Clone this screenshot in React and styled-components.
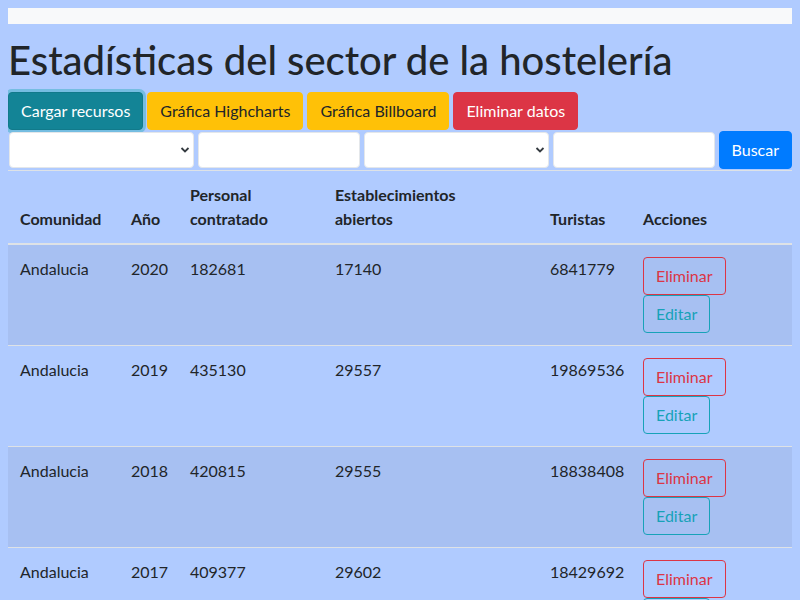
import React from 'react';
import styled, { createGlobalStyle, css } from 'styled-components';

const GlobalStyle = createGlobalStyle`
    * { box-sizing: border-box; }
    body {
        margin: 8px;
        background: #b0cbff;
        font-family: Lato, "Noto Sans", sans-serif;
        font-size: 16px;
        line-height: 1.5;
        color: #212529;
    }
`

const variants = {
    info: css`background: #138496; border-color: #117a8b; color: #fff; box-shadow: 0 0 0 3px rgba(58, 176, 195, 0.5);`,
    warning: css`background: #ffc107; border-color: #ffc107; color: #212529;`,
    danger: css`background: #dc3545; border-color: #dc3545; color: #fff;`,
    primary: css`background: #007bff; border-color: #007bff; color: #fff;`,
    outlineDanger: css`background: transparent; border-color: #dc3545; color: #dc3545;`,
    outlineInfo: css`background: transparent; border-color: #17a2b8; color: #17a2b8;`,
}

const TopBar = styled.nav`
    height: 16px;
    background: #f8f9fa;
`

const Title = styled.h1`
    margin: 12px 0 8px;
    font-size: 40px;
    font-weight: 500;
    line-height: 1.2;
`

const Button = styled.button`
    display: ${(p) => (p.block ? 'block' : 'inline-block')};
    height: 38px;
    padding: 6px 12px;
    border: 1px solid transparent;
    border-radius: 4px;
    font-family: inherit;
    font-size: 16px;
    line-height: 24px;
    white-space: nowrap;
    cursor: pointer;
    ${(p) => variants[p.variant]}
`

const Toolbar = styled.div`
    display: flex;
    gap: 4px;
`

const SearchRow = styled.form`
    display: flex;
    align-items: center;
    gap: 4px;
    margin-top: 1px;
    padding-left: 1px;
`

const SelectWrap = styled.div`
    position: relative;
    width: ${(p) => p.w}px;
`

const Select = styled.select`
    appearance: none;
    width: 100%;
    height: 36px;
    border: 1px solid #e4e7ea;
    border-radius: 4px;
    background: #fff;
    font-family: inherit;
    font-size: 16px;
`

const Chevron = styled.svg`
    position: absolute;
    right: 4px;
    top: 14px;
    pointer-events: none;
`

const Input = styled.input`
    width: ${(p) => p.w}px;
    height: 36px;
    border: 1px solid #e4e7ea;
    border-radius: 4px;
    background: #fff;
    font-family: inherit;
    font-size: 16px;
`

const Table = styled.table`
    width: 100%;
    margin-top: 1px;
    border-collapse: collapse;
    table-layout: fixed;
`

const Th = styled.th`
    padding: 12px;
    text-align: left;
    vertical-align: bottom;
    font-weight: 700;
    border-top: 1px solid #dee2e6;
    border-bottom: 2px solid #dee2e6;
`

const HeadLabel = styled.span`
    display: block;
    max-width: 150px;
`

const Row = styled.tr`
    background: ${(p) => (p.striped ? 'rgba(0, 0, 0, 0.05)' : 'transparent')};
`

const Td = styled.td`
    padding: 12px;
    vertical-align: top;
    border-top: 1px solid #dee2e6;
`

const SelectBox = ({ w }) => (
    <SelectWrap w={w}>
        <Select>
            <option></option>
        </Select>
        <Chevron width="10" height="8" viewBox="0 0 10 8">
            <path d="M1.5 2 L5 5.5 L8.5 2" fill="none" stroke="#343a40" strokeWidth="1.8" />
        </Chevron>
    </SelectWrap>
)

const columns = [
    ['Comunidad', 111],
    ['Año', 59],
    ['Personal contratado', 145],
    ['Establecimientos abiertos', 215],
    ['Turistas', 93],
    ['Acciones', 161],
]

const data = [
    ['Andalucia', 2020, 182681, 17140, 6841779],
    ['Andalucia', 2019, 435130, 29557, 19869536],
    ['Andalucia', 2018, 420815, 29555, 18838408],
    ['Andalucia', 2017, 409377, 29602, 18429692],
    ['Andalucia', 2016, 391208, 29410, 17882751],
]

export default function App() {
    return (
        <div>
            <GlobalStyle />
            <TopBar />
            <Title>Estadísticas del sector de la hostelería</Title>
            <Toolbar>
                <Button variant="info">Cargar recursos</Button>
                <Button variant="warning">Gráfica Highcharts</Button>
                <Button variant="warning">Gráfica Billboard</Button>
                <Button variant="danger">Eliminar datos</Button>
            </Toolbar>
            <SearchRow onSubmit={(e) => e.preventDefault()}>
                <SelectBox w={186} />
                <Input w={162} />
                <SelectBox w={185} />
                <Input w={162} />
                <Button variant="primary">Buscar</Button>
            </SearchRow>
            <Table>
                <colgroup>
                    {columns.map(([name, w]) => <col key={name} style={{ width: w }} />)}
                </colgroup>
                <thead>
                    <tr>
                        {columns.map(([name]) => <Th key={name}><HeadLabel>{name}</HeadLabel></Th>)}
                    </tr>
                </thead>
                <tbody>
                    {data.map((r, i) => (
                        <Row key={r[1]} striped={i % 2 === 0}>
                            {r.map((v, j) => <Td key={j}>{v}</Td>)}
                            <Td>
                                <Button block variant="outlineDanger">Eliminar</Button>
                                <Button block variant="outlineInfo">Editar</Button>
                            </Td>
                        </Row>
                    ))}
                </tbody>
            </Table>
        </div>
    );
}
